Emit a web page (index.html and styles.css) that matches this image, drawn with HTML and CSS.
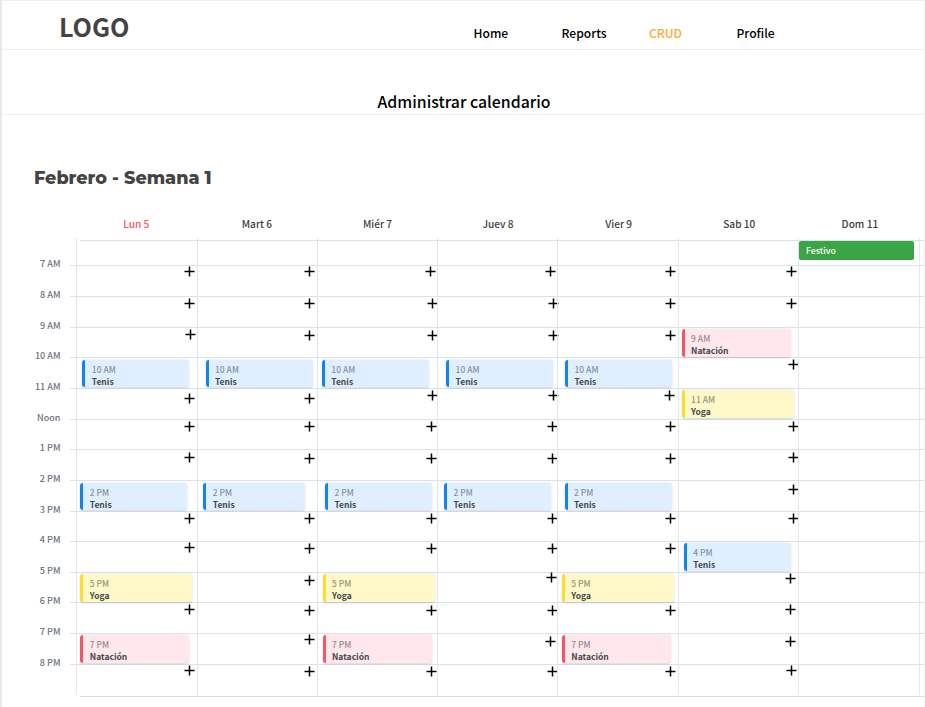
FILE: index.html
```html
<!DOCTYPE html>
<html lang="es">
<head>
<meta charset="utf-8">
<title>Administrar calendario</title>
<link rel="stylesheet" href="styles.css">
</head>
<body>
<header class="topbar">
  <div class="logo">LOGO</div>
  <nav class="nav">
    <a>Home</a><a>Reports</a><a class="active">CRUD</a><a>Profile</a>
  </nav>
</header>
<div class="page-title"><h1>Administrar calendario</h1></div>
<main>
  <h2 class="week">Febrero - Semana 1</h2>
  <div class="days">
    <div class="today">Lun 5</div><div>Mart 6</div><div>Miér 7</div><div>Juev 8</div><div>Vier 9</div><div>Sab 10</div><div>Dom 11</div>
  </div>
  <div class="ticks"><i></i><i></i><i></i><i></i><i></i><i></i><i></i><i></i></div>
  <div class="board" id="board"></div>
  <div class="board-end"></div>
</main>
<script src="calendar.js"></script>
</body>
</html>
```
FILE: styles.css
```css
* { box-sizing: border-box; }
body {
  margin: 0;
  height: 707px;
  overflow: hidden;
  background: #fff;
  border-top: 1px solid #efefef;
  border-left: 2px solid #e8e8e8;
  border-right: 1px solid #f2f2f2;
  font-family: "Noto Sans CJK JP", "Noto Sans", sans-serif;
  color: #3c4043;
}
.topbar {
  display: flex;
  height: 49px;
  border-bottom: 1px solid #efefef;
}
.logo {
  width: 471.5px;
  padding-left: 57px;
  font-size: 25.2px;
  line-height: 51px;
  font-weight: 700;
  color: #444;
}
.nav {
  display: grid;
  grid-template-columns: 88px 87.5px 87.5px 60px;
  font-size: 12.1px;
  line-height: 63px;
  font-weight: 500;
  color: #000;
}
.nav .active { color: #ffa92e; }
.page-title {
  height: 65px;
  padding: 40px 0 0 2px;
  border-bottom: 1px solid #f1f1f1;
  text-align: center;
}
.page-title h1 {
  margin: 0;
  font-size: 15.85px;
  line-height: 24px;
  font-weight: 500;
  color: #000;
}
.week {
  margin: 50px 0 0 32px;
  height: 26px;
  font-family: Montserrat, Inter, sans-serif;
  font-size: 17.6px;
  line-height: 26px;
  font-weight: 800;
  color: #444;
  white-space: nowrap;
}
.days {
  display: grid;
  grid-template-columns: 120.6px 120.6px 120.6px 120.6px 120.6px 120.6px 120.6px;
  margin: 23px 0 0 74px;
  height: 24px;
  font-size: 10.1px;
  line-height: 20px;
  font-weight: 500;
  text-align: center;
}
.days .today { color: #fa5566; }
.ticks, .board {
  display: grid;
  grid-template-columns: 68px 6px 121px 120px 120px 120px 121px 120px 121px 6px;
}
.ticks { height: 2px; padding-left: 74px; grid-template-columns: 121px 120px 120px 120px 121px 120px 121px 6px; }
.ticks i { border-left: 1px solid #e3e6ea; }
.board {
  height: 455px;
  grid-template-rows: 25px 31px 31px 30px 31px 31px 30px 31px 31px 30px 31px 30px 31px 31px 31px;
}
.hour {
  margin-top: -12px;
  height: 20px;
  padding-right: 9.5px;
  text-align: right;
  font-size: 9.1px;
  line-height: 20px;
  font-weight: 500;
  color: #70757a;
}
.stub { border-top: 1px solid #dae2ea; }
.stub.blank { border-color: transparent; }
.cell {
  display: grid;
  grid-template: 100% / 100%;
  border-top: 1px solid #dae2ea;
  border-left: 1px solid #e3e6ea;
}
.cell > * { grid-area: 1 / 1; }
.cell.corner {
  border-top-color: transparent;
  background: linear-gradient(#dae2ea, #dae2ea) 3px -1px / 120px 1px no-repeat;
}
.board-end { height: 1px; margin: 1px 0 0 78px; background: #d5e0e9; }
.plus { width: 11px; height: 11px; stroke: #000; stroke-width: 1.5; overflow: visible; }
.event {
  z-index: 1;
  height: 27.5px;
  padding: 3px 0 0 6.5px;
  border-left: 3.5px solid;
  border-radius: 3px;
  box-shadow: 0 .5px 2px rgba(60, 70, 90, .22);
  font-size: 8.5px;
  line-height: 12px;
}
.event time, .event b { display: block; }
.event time { font-weight: 500; }
.event b { font-weight: 700; color: #44484c; }
.tenis { background: #e0efff; border-color: #1583ee; }
.tenis time { color: #8592a0; }
.yoga { background: #fff9ca; border-color: #fbdf2c; }
.yoga time { color: #96937c; }
.natacion { background: #ffe7ec; border-color: #f25767; }
.natacion time { color: #9c898f; }
.holiday {
  width: 115px;
  height: 19px;
  margin-top: 0;
  padding-left: 7px;
  border-radius: 2px;
  background: #39a546;
  color: #fff;
  font-size: 8.8px;
  line-height: 19px;
  font-weight: 500;
}
```
FILE: calendar.js
```js
const hours = ['', '7 AM', '8 AM', '9 AM', '10 AM', '11 AM', 'Noon', '1 PM', '2 PM', '3 PM', '4 PM', '5 PM', '6 PM', '7 PM', '8 PM'];

// Events by day: row -> [class, label, left inset, top inset, width]
const events = [
  { 4: ['tenis', 'Tenis', 5.5, 1.5, 107], 8: ['tenis', 'Tenis', 3.5, 1.5, 107], 11: ['yoga', 'Yoga', 3.5, 1, 112], 13: ['natacion', 'Natación', 3.5, 1.3, 109] },
  { 4: ['tenis', 'Tenis', 7.7, 1.5, 107], 8: ['tenis', 'Tenis', 5.5, 1.5, 102] },
  { 4: ['tenis', 'Tenis', 4, 1.5, 107], 8: ['tenis', 'Tenis', 7.2, 1.5, 107], 11: ['yoga', 'Yoga', 4.7, 1, 112], 13: ['natacion', 'Natación', 4.7, 1.3, 109] },
  { 4: ['tenis', 'Tenis', 8.3, 1.5, 107], 8: ['tenis', 'Tenis', 6.2, 1.5, 107] },
  { 4: ['tenis', 'Tenis', 7.2, 1.5, 107], 8: ['tenis', 'Tenis', 6.7, 1.5, 107], 11: ['yoga', 'Yoga', 4, 1, 112], 13: ['natacion', 'Natación', 4, 1.3, 109] },
  { 3: ['natacion', 'Natación', 2.8, 1, 109], 5: ['yoga', 'Yoga', 2.8, 1, 112.5], 10: ['tenis', 'Tenis', 5, 1, 107] },
  {}
];

// Centre of each add button inside its cell, by day: row -> [x, y]
const adds = [
  { 1: [113, 7], 2: [113, 8], 3: [114, 8], 5: [113, 10.5], 6: [113, 7.5], 7: [113, 9], 9: [113, 7.5], 10: [113, 7], 12: [113, 8], 14: [113, 7] },
  { 1: [112.5, 7], 2: [112.5, 8], 3: [112.5, 9], 5: [112.5, 10.5], 6: [112, 8], 7: [112, 10], 9: [112, 8], 10: [112, 8], 11: [112.5, 8.5], 12: [112, 9], 13: [112, 6.5], 14: [112, 8] },
  { 1: [113, 7], 2: [115, 8], 3: [115, 9], 5: [115, 7.5], 6: [114.5, 8], 7: [114.5, 10], 9: [114.5, 8], 10: [114.5, 8], 12: [114.5, 9], 14: [114.5, 8] },
  { 1: [113.5, 7], 2: [116, 8], 3: [116, 9], 5: [116, 7.5], 6: [115.5, 8], 7: [115.5, 10], 9: [115.5, 8], 10: [115.5, 8], 11: [114, 6], 12: [115.5, 9], 13: [113.5, 8.5], 14: [115.5, 8] },
  { 1: [113.5, 7], 2: [113.5, 8], 3: [113.5, 9], 5: [112.5, 7.5], 6: [113, 8], 7: [113, 10], 9: [113, 8], 10: [113, 8], 12: [113, 9], 14: [113, 8] },
  { 1: [113, 7], 2: [113, 8], 4: [115.5, 8], 6: [115.5, 7.5], 7: [115.5, 9], 8: [115.5, 10], 9: [115.5, 7.5], 11: [112.5, 6.5], 12: [112.5, 8], 13: [112.5, 9], 14: [113, 7] },
  {}
];

let html = '';
hours.forEach((hour, row) => {
  html += `<div class="hour">${hour}</div><div class="stub${row ? '' : ' blank'}"></div>`;
  for (let day = 0; day < 7; day++) {
    html += `<div class="cell${row + day ? '' : ' corner'}">`;
    const ev = events[day][row];
    const add = adds[day][row];
    if (ev) {
      html += `<div class="event ${ev[0]}" style="margin:${ev[3]}px 0 0 ${ev[2] - 0.2}px;width:${ev[4]}px"><time>${hour}</time><b>${ev[1]}</b></div>`;
    }
    if (add) {
      html += `<svg class="plus" viewBox="0 0 11 11" style="margin:${Math.round(add[1] - 6.51)}px 0 0 ${Math.round(add[0] - 6.49)}px"><path d="M5.5 .5v10M.5 5.5h10"/></svg>`;
    }
    if (day === 6 && row === 0) html += '<div class="holiday">Festivo</div>';
    html += '</div>';
  }
  html += '<div class="cell"></div>';
});
document.getElementById('board').innerHTML = html;
```
